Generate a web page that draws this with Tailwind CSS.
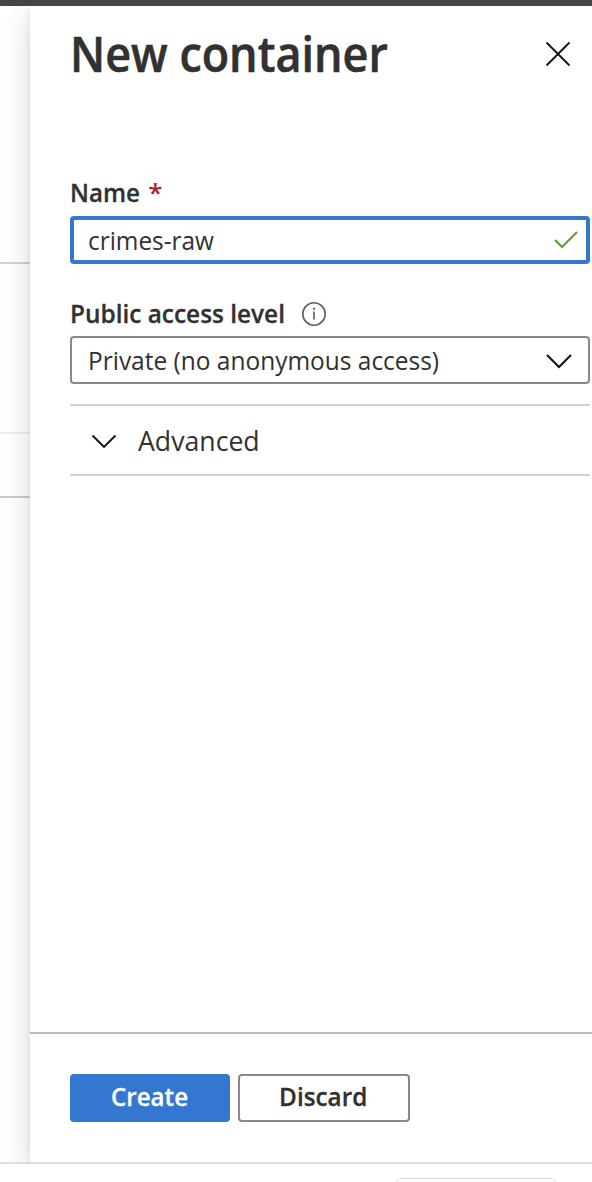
<!DOCTYPE html>
<html lang="en">
<head>
<meta charset="utf-8">
<title>New container</title>
<script src="https://cdn.jsdelivr.net/npm/@tailwindcss/browser@4"></script>
</head>
<body class="bg-white">
<div class="flex h-[1182px] w-[592px] flex-col overflow-hidden bg-white font-['Open_Sans','Noto_Sans',sans-serif] text-[26px] text-[#323130]">
  <div class="h-1.5 shrink-0 bg-[#464543]"></div>
  <main class="flex h-[1156px] shrink-0 overflow-hidden">
    <div class="flex w-[30px] shrink-0 flex-col">
      <div class="h-[258px] shrink-0 border-b-2 border-[#d2d2d2]"></div>
      <div class="h-[170px] shrink-0 border-b-2 border-[#ededed]"></div>
      <div class="h-16 shrink-0 border-b-2 border-[#cccccc]"></div>
    </div>
    <section class="flex flex-1 flex-col bg-white shadow-[0_10px_29px_rgba(0,0,0,0.15),0_2px_7px_rgba(0,0,0,0.08)]">
      <header class="flex h-24 shrink-0 items-center justify-between pl-10 pr-5">
        <h1 class="origin-left scale-x-[0.936] whitespace-nowrap text-[48px] leading-[94px] font-semibold [-webkit-text-stroke:0.6px_#323130]">New container</h1>
        <svg class="size-7" viewBox="0 0 28 28" fill="none" stroke="#111" stroke-width="1.8"><path d="M2.5 2.5 25.5 25.5M25.5 2.5 2.5 25.5"/></svg>
      </header>
      <div class="flex flex-1 flex-col pl-10 pr-0.5 pt-[73px]">
        <label class="flex h-[35px] items-center gap-[3px] font-semibold"><span class="origin-left scale-x-[0.93] [-webkit-text-stroke:0.3px_#323130]">Name</span><span class="text-[#a4262c]">*</span></label>
        <div class="mt-1.5 flex h-12 items-center justify-between rounded-[4px] border-4 border-[#3477d0] pl-3.5 pr-2">
          <span class="origin-left scale-x-[0.938]">crimes-raw</span>
          <svg class="h-[18px] w-6" viewBox="0 0 24 18" fill="none" stroke="#5b9f27" stroke-width="2"><path d="M1 9 8 16 23 1"/></svg>
        </div>
        <label class="mt-8 flex h-[35px] items-center gap-0.5 font-semibold"><span class="origin-left scale-x-[0.938] [-webkit-text-stroke:0.3px_#323130]">Public access level</span>
          <svg class="size-[26px]" viewBox="0 0 26 26" fill="none" stroke="#605e5c"><circle cx="13" cy="13" r="11.2" stroke-width="1.6"/><path d="M13 10.5V18.5M13 6.5V9" stroke-width="1.6"/></svg>
        </label>
        <div class="mt-[5px] flex h-12 items-center justify-between rounded-[4px] border-2 border-[#8a8886] pl-4 pr-[15px]">
          <span class="origin-left scale-x-[0.941]">Private (no anonymous access)</span>
          <svg class="mt-0.5 h-4 w-[28px]" viewBox="0 0 28 16" fill="none" stroke="#111" stroke-width="2"><path d="M2 2 14 14 26 2"/></svg>
        </div>
        <div class="mt-5 flex h-[72px] items-center border-y-2 border-[#d2d2d2] pl-5">
          <svg class="mt-0.5 h-4 w-7" viewBox="0 0 28 16" fill="none" stroke="#111" stroke-width="1.9"><path d="M2.5 2.5 14 14 25.5 2.5"/></svg>
          <span class="ml-5 origin-left scale-x-[0.952] text-[28px]">Advanced</span>
        </div>
      </div>
      <footer class="flex h-[130px] shrink-0 gap-2 border-t-2 border-[#bababa] pl-10 pt-10 font-semibold">
        <button class="h-12 w-40 rounded-[4px] bg-[#3477d0] pb-[3px] text-white"><span class="inline-block scale-x-[0.928] [-webkit-text-stroke:0.3px_#ffffff]">Create</span></button>
        <button class="h-12 w-[172px] rounded-[4px] border-2 border-[#8a8886] bg-white pb-[3px] pr-0.5"><span class="inline-block scale-x-[0.935] [-webkit-text-stroke:0.3px_#323130]">Discard</span></button>
      </footer>
    </section>
  </main>
  <div class="flex h-5 shrink-0 border-t-2 border-[#dcdce1] pl-[394px] pt-3.5">
    <div class="h-10 w-[164px] shrink-0 rounded-[8px] border border-[#dcdcdc]"></div>
  </div>
</div>
</body>
</html>
